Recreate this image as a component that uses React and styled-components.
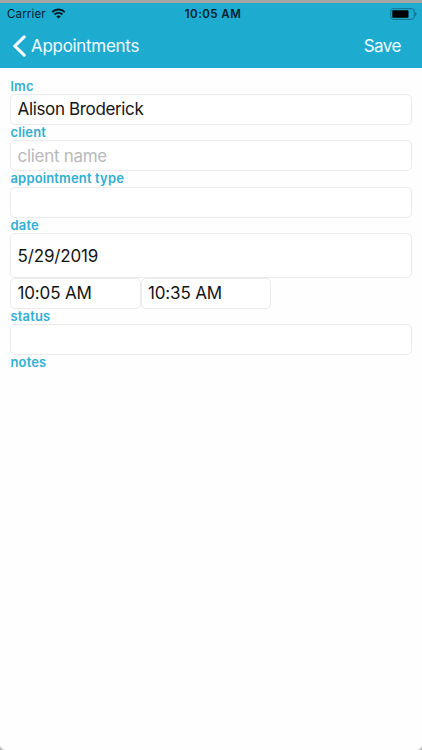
import React from 'react'
import styled, {createGlobalStyle} from 'styled-components'

const GlobalStyle = createGlobalStyle`
  * {
    box-sizing: border-box;
  }
  body {
    margin: 0;
    background: #b4b4b4;
    font-family: Inter, 'Liberation Sans', sans-serif;
  }
`

const Screen = styled.div`
  height: 750px;
  overflow: hidden;
  background: #fefefe;
  border-radius: 0 0 5px 5px;
`

const Header = styled.header`
  height: 68px;
  background: #1eabd0;
  border-top: 3px solid #a3a5a6;
`

const StatusBar = styled.div`
  display: grid;
  grid-template-columns: 1fr auto 1fr;
  align-items: center;
  height: 21px;
  padding: 0 5px 0 7px;
  color: #06212a;
  font-size: 11.5px;
`

const Carrier = styled.div`
  display: flex;
  align-items: center;
  gap: 5px;
  letter-spacing: 0.15px;
`

const Clock = styled.div`
  padding-left: 2px;
  font-weight: 600;
  letter-spacing: 0.45px;
`

const Battery = styled.svg`
  justify-self: end;
`

const NavBar = styled.nav`
  display: flex;
  align-items: center;
  justify-content: space-between;
  height: 44px;
  padding: 0 21px 0 12px;
`

const NavButton = styled.button`
  display: flex;
  align-items: center;
  gap: 4px;
  padding: 0;
  border: 0;
  background: none;
  color: #f0fbfe;
  font-family: inherit;
  font-size: 17px;
  letter-spacing: ${props => props.$spacing || '-0.3px'};
`

const Form = styled.form`
  padding: 10.6px 10px 0;
`

const Label = styled.label`
  display: block;
  height: 15.4px;
  padding-left: 0.5px;
  color: #31afd0;
  font-size: 13px;
  font-weight: 600;
  line-height: 14.8px;
  letter-spacing: 0.15px;
`

const Input = styled.input`
  display: block;
  width: ${props => props.$width || '100%'};
  height: ${props => props.$height || '31px'};
  padding: 0 6.5px;
  border: 1px solid #ebebeb;
  border-radius: 5px;
  outline: none;
  background: #fff;
  color: #151515;
  font-family: inherit;
  font-size: 17px;
  letter-spacing: ${props => props.$spacing || '-0.3px'};
  &::placeholder {
    color: #b9b9b9;
    opacity: 1;
  }
`

const Times = styled.div`
  display: flex;
  margin-bottom: -0.4px;
`

function WifiIcon() {
  return (
    <svg width='15' height='11' viewBox='0 0 14 11' fill='none' stroke='#06161c' strokeWidth='2'>
      <path d='M0.7 4.1C4.2 0.7 9.8 0.7 13.3 4.1' />
      <path d='M3.1 6.6C5.3 4.6 8.7 4.6 10.9 6.6' />
      <path d='M7 10.6L4.8 8.4C6 7.3 8 7.3 9.2 8.4Z' fill='#06161c' stroke='none' />
    </svg>
  )
}

function BatteryIcon() {
  return (
    <Battery width='27' height='12' viewBox='0 0 27 12'>
      <rect x='0.8' y='0.7' width='23.4' height='10.6' rx='2.5' fill='none' stroke='#117088' />
      <rect x='2.3' y='2.2' width='16.2' height='7.6' rx='0.8' fill='#000' />
      <path d='M25.2 4C27 4.5 27 7.5 25.2 8Z' fill='#117088' />
    </Battery>
  )
}

function BackIcon() {
  return (
    <svg width='15' height='22' viewBox='0 0 15 22' fill='none' stroke='#fff' strokeWidth='3' strokeLinecap='round'>
      <path d='M12.2 1.9L2.9 11L12.2 20.1' />
    </svg>
  )
}

export default function App() {
  return (
    <>
      <GlobalStyle />
      <Screen>
        <Header>
          <StatusBar>
            <Carrier>
              Carrier
              <WifiIcon />
            </Carrier>
            <Clock>10:05 AM</Clock>
            <BatteryIcon />
          </StatusBar>
          <NavBar>
            <NavButton type='button'>
              <BackIcon />
              Appointments
            </NavButton>
            <NavButton type='button' $spacing='-0.5px'>Save</NavButton>
          </NavBar>
        </Header>
        <Form>
          <Label htmlFor='lmc'>lmc</Label>
          <Input id='lmc' defaultValue='Alison Broderick' $spacing='-0.35px' />
          <Label htmlFor='client'>client</Label>
          <Input id='client' placeholder='client name' />
          <Label htmlFor='type'>appointment type</Label>
          <Input id='type' />
          <Label htmlFor='date'>date</Label>
          <Input id='date' defaultValue='5/29/2019' $height='44.8px' $spacing='-0.15px' />
          <Times>
            <Input defaultValue='10:05 AM' $width='130.5px' $spacing='-0.15px' />
            <Input defaultValue='10:35 AM' $width='130.5px' $spacing='-0.15px' />
          </Times>
          <Label htmlFor='status'>status</Label>
          <Input id='status' />
          <Label>notes</Label>
        </Form>
      </Screen>
    </>
  )
}
